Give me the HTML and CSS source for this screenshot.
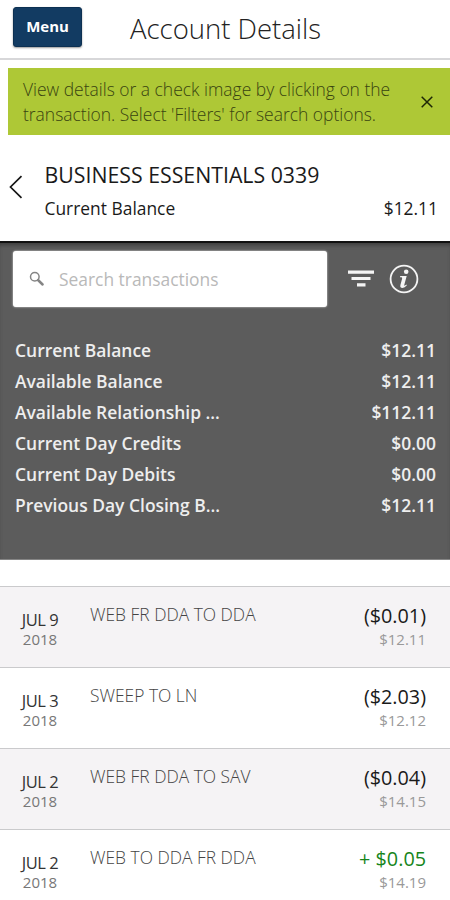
FILE: index.html
```html
<!DOCTYPE html>
<html lang="en">
<head>
<meta charset="utf-8">
<title>Account Details</title>
<link rel="stylesheet" href="styles.css">
</head>
<body>
<header class="topbar">
  <button class="menu">Menu</button>
  <h1 class="title">Account Details</h1>
</header>
<div class="notice">
  <p class="notice-text">View details or a check image by clicking on the<br>transaction. Select 'Filters' for search options.</p>
  <svg class="close" width="12" height="12" viewBox="0 0 12 12"><path d="M.7.7l10.6 10.6M11.3.7L.7 11.3" fill="none" stroke="#1d2606" stroke-width="1.5"/></svg>
</div>
<section class="account">
  <svg class="back" width="14" height="24" viewBox="0 0 14 24"><path d="M12.5 1.2L1.5 12l11 10.8" fill="none" stroke="#161616" stroke-width="1.7"/></svg>
  <div class="account-info">
    <h2 class="account-name">BUSINESS ESSENTIALS 0339</h2>
    <div class="account-balance"><span>Current Balance</span><span>$12.11</span></div>
  </div>
</section>
<section class="panel">
  <div class="tools">
    <div class="search">
      <svg width="16" height="16" viewBox="0 0 16 16" fill="none" stroke="#858585"><circle cx="5.8" cy="5.7" r="4.3" stroke-width="1.5"/><path d="M9 9l4.6 4.5" stroke-width="2.5" stroke-linecap="round"/></svg>
      <span class="placeholder">Search transactions</span>
    </div>
    <svg class="filter" width="26" height="18" viewBox="0 0 26 18" fill="#f4f4f4"><path d="M0 .5h26v3.2H0zM3.5 7h19v3H3.5zM9 13.2h8.500v3.300H9z"/></svg>
    <svg class="info" width="30" height="30" viewBox="0 0 30 30"><circle cx="15" cy="15" r="13.400" fill="none" stroke="#f4f4f4" stroke-width="1.8"/><circle cx="17.200" cy="7.700" r="2.300" fill="#f4f4f4"/><path d="M11.200 12h6.500l-2.400 8.700q-.3 1.400.7.900l1.400-1 .5.700q-2.200 2.600-4.400 2.600-2.800 0-2.100-2.900l1.700-6.300q.3-1.300-.6-1.400h-1.500z" fill="#f4f4f4"/></svg>
  </div>
  <dl class="balances">
    <div class="balance"><dt>Current Balance</dt><dd>$12.11</dd></div>
    <div class="balance"><dt>Available Balance</dt><dd>$12.11</dd></div>
    <div class="balance"><dt>Available Relationship ...</dt><dd>$112.11</dd></div>
    <div class="balance"><dt>Current Day Credits</dt><dd>$0.00</dd></div>
    <div class="balance"><dt>Current Day Debits</dt><dd>$0.00</dd></div>
    <div class="balance"><dt>Previous Day Closing B...</dt><dd>$12.11</dd></div>
  </dl>
</section>
<ul class="transactions">
  <li class="transaction shaded">
    <div class="date"><div class="day">JUL 9</div><div class="year">2018</div></div>
    <div class="description">WEB FR DDA TO DDA</div>
    <div class="amounts"><div class="amount">($0.01)</div><div class="running">$12.11</div></div>
  </li>
  <li class="transaction">
    <div class="date"><div class="day">JUL 3</div><div class="year">2018</div></div>
    <div class="description">SWEEP TO LN</div>
    <div class="amounts"><div class="amount">($2.03)</div><div class="running">$12.12</div></div>
  </li>
  <li class="transaction shaded">
    <div class="date"><div class="day">JUL 2</div><div class="year">2018</div></div>
    <div class="description">WEB FR DDA TO SAV</div>
    <div class="amounts"><div class="amount">($0.04)</div><div class="running">$14.15</div></div>
  </li>
  <li class="transaction">
    <div class="date"><div class="day">JUL 2</div><div class="year">2018</div></div>
    <div class="description">WEB TO DDA FR DDA</div>
    <div class="amounts"><div class="amount credit">+ $0.05</div><div class="running">$14.19</div></div>
  </li>
</ul>
</body>
</html>
```
FILE: styles.css
```css
* { box-sizing: border-box; margin: 0; padding: 0; }
html, body { height: 900px; overflow: hidden; }
body { width: 450px; background: #fff; font-family: "Open Sans", sans-serif; color: #1a1a1a; white-space: nowrap; }

.topbar { display: flex; height: 60px; border-bottom: 2px solid #d7d7d9; padding: 7px 0 0 13px; }
.menu { width: 69px; height: 40px; border: 1px solid #0c3052; border-radius: 3px; background: #123b62; color: #fff; font: 700 15px/34px "Open Sans", sans-serif; padding-bottom: 2px; box-shadow: 0 1px 2px #0006; }
.title { margin-left: 48px; font-size: 27.500px; line-height: 43px; font-weight: 300; color: #222; }

.notice { display: flex; justify-content: space-between; align-items: center; height: 67px; margin: 8px 0 0 8px; padding: 0 17px 0 15px; background: #aec836; color: #394411; }
.notice-text { font-size: 17.450px; line-height: 25px; font-weight: 300; }

.account { display: flex; height: 108px; padding: 27px 12px 0 9px; border-bottom: 2px solid #111; }
.back { margin-top: 13px; }
.account-info { flex: 1; margin-left: 21.500px; }
.account-name { font-size: 21.300px; line-height: 26px; font-weight: 400; }
.account-balance { display: flex; justify-content: space-between; margin-top: 7px; font-size: 17.400px; line-height: 26px; }

.panel { height: 317px; padding: 8px 14px 0 13px; background: #5c5c5c; box-shadow: inset 0 4px 4px -2px #3b3b3b; border-bottom: 1px solid #858585; }
.tools { display: flex; align-items: center; }
.search { display: flex; align-items: center; width: 314px; height: 56px; padding-left: 16px; border-radius: 3px; background: #fff; box-shadow: 0 0 2px #eee; }
.placeholder { margin-left: 14px; font-size: 17.400px; color: #b9b9b9; }
.filter { margin-left: 21px; }
.info { margin-left: 15px; }
.balances { margin-top: 28px; padding-left: 2px; color: #eee; font-size: 17.450px; line-height: 31px; font-weight: 600; }
.balance { display: flex; justify-content: space-between; }

.transactions { margin-top: 26px; list-style: none; }
.transaction { display: flex; height: 81.1px; border-top: 1px solid #cacacc; padding-right: 24px; }
.shaded { background: #f5f3f5; }
.date { width: 80px; padding-top: 23px; text-align: center; }
.day { font-size: 16.500px; line-height: 19px; letter-spacing: -.5px; color: #333; }
.year { font-size: 15px; line-height: 21px; color: #777; }
.description { flex: 1; margin-left: 10px; padding-top: 16px; font-size: 17.400px; line-height: 22px; font-weight: 300; color: #444; }
.amounts { padding-top: 17px; text-align: right; }
.amount { font-size: 19.800px; line-height: 24px; }
.running { font-size: 15px; line-height: 22px; color: #999; }
.credit { color: #16851b; }
```
